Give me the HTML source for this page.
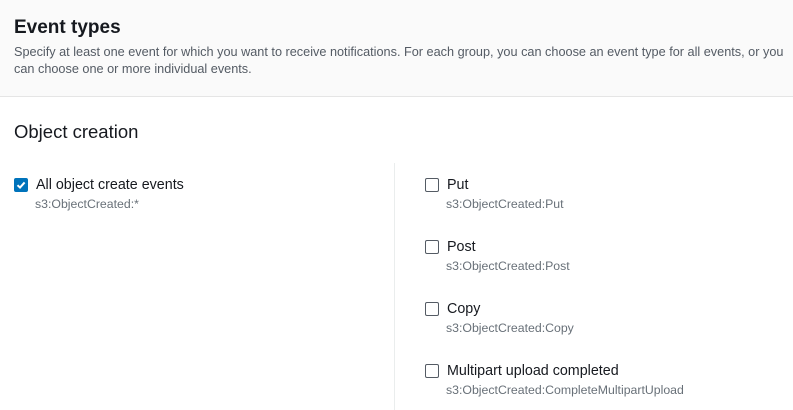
<!DOCTYPE html><html><head><style>
body{margin:0;width:793px;height:410px;overflow:hidden;background:#fff;font-family:"Liberation Sans",sans-serif;color:#16191f;position:relative}
.hd{position:absolute;left:0;top:0;width:793px;height:96px;background:#fafafa;border-bottom:1px solid #e5e5e5}
.t{position:absolute;left:14px;top:17px;font-size:19px;font-weight:bold}
.d{position:absolute;left:14px;top:44px;width:776px;font-size:12.7px;line-height:17px;color:#545b64}
.h2{position:absolute;left:14px;top:121px;font-size:18.5px}
.vl{position:absolute;left:394px;top:163px;width:1px;height:247px;background:#eaeded}
.it{position:absolute}
.cb{position:absolute;left:0;top:1px;width:12px;height:12px;border:1px solid #545b64;border-radius:2px;background:#fff}
.cb.on{background:#0073bb;border-color:#0073bb}
.l{position:absolute;left:22px;top:0px;font-size:14.3px;white-space:nowrap}
.s{position:absolute;left:21px;top:20px;font-size:12.3px;color:#687078;white-space:nowrap}
</style></head><body>
<div class="hd"></div>
<div class="t">Event types</div>
<div class="d">Specify at least one event for which you want to receive notifications. For each group, you can choose an event type for all events, or you can choose one or more individual events.</div>
<div class="h2">Object creation</div>
<div class="vl"></div>
<div class="it" style="left:14px;top:177px"><div class="cb on"><svg width="12" height="12" viewBox="0 0 12 12" style="position:absolute;left:0;top:0"><path d="M2.5 6.2L5 8.6 9.6 3.4" stroke="#fff" stroke-width="2" fill="none"/></svg></div><div class="l">All object create events</div><div class="s">s3:ObjectCreated:*</div></div>
<div class="it" style="left:425px;top:177px"><div class="cb"></div><div class="l">Put</div><div class="s">s3:ObjectCreated:Put</div></div>
<div class="it" style="left:425px;top:239px"><div class="cb"></div><div class="l">Post</div><div class="s">s3:ObjectCreated:Post</div></div>
<div class="it" style="left:425px;top:301px"><div class="cb"></div><div class="l">Copy</div><div class="s">s3:ObjectCreated:Copy</div></div>
<div class="it" style="left:425px;top:363px"><div class="cb"></div><div class="l">Multipart upload completed</div><div class="s">s3:ObjectCreated:CompleteMultipartUpload</div></div>
</body></html>
